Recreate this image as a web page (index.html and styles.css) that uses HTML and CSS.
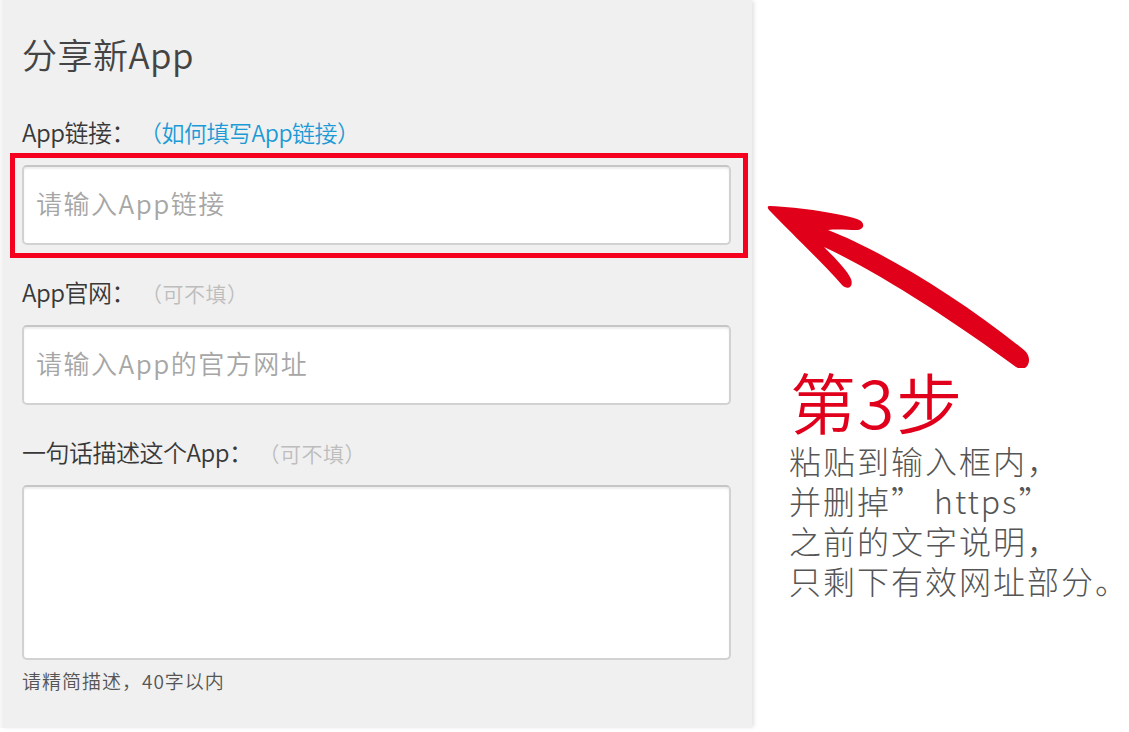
FILE: index.html
```html
<!DOCTYPE html>
<html lang="zh-CN">
<head>
<meta charset="utf-8">
<title>分享新App</title>
<link rel="stylesheet" href="styles.css">
</head>
<body>
<div class="page">
  <main class="panel">
    <h1 class="title">分享新App</h1>

    <div class="field field-first">
      <label class="label">App链接：<a class="help" href="#">（如何填写App链接）</a></label>
      <div class="input-wrap">
        <input class="input" type="text" placeholder="请输入App链接">
        <div class="highlight"></div>
      </div>
    </div>

    <div class="field">
      <label class="label">App官网：<span class="optional">（可不填）</span></label>
      <div class="input-wrap">
        <input class="input" type="text" placeholder="请输入App的官方网址">
      </div>
    </div>

    <div class="field">
      <label class="label">一句话描述这个App：<span class="optional">（可不填）</span></label>
      <textarea class="textarea"></textarea>
    </div>

    <p class="hint">请精简描述，40字以内</p>
  </main>

  <aside class="note">
    <svg class="arrow" width="280" height="178" viewBox="760 190 280 178" xmlns="http://www.w3.org/2000/svg">
      <path d="M770 206 C 800 207, 842 214, 857 219 C 866 222, 865 230, 856 230 C 848 230, 838 229, 828 230 C 880 250, 960 298, 1024 350 C 1034 358, 1028 374, 1016 367 C 955 322, 878 272, 824 247 C 835 258, 847 270, 851 279 C 854 288, 847 290, 842 285 C 820 260, 790 232, 770 211 C 767 208, 767 206, 770 206 Z" fill="#e0001a"/>
    </svg>
    <div class="step">第3步</div>
    <p class="desc">粘贴到输入框内，<br>并删掉” https”<br>之前的文字说明，<br>只剩下有效网址部分。</p>
  </aside>
</div>
</body>
</html>
```

FILE: styles.css
```css
* {
  box-sizing: border-box;
}

html, body {
  margin: 0;
  padding: 0;
  background: #ffffff;
}

body {
  font-family: "Noto Sans CJK SC", "Noto Sans", sans-serif;
  font-weight: 350;
  width: 1129px;
  height: 732px;
  overflow: hidden;
  text-spacing-trim: space-all;
}

.page {
  display: flex;
  align-items: flex-start;
}

.panel {
  flex: none;
  width: 752px;
  height: 728px;
  background: #f0f0f0;
  border-left: 2px solid #f6f6f6;
  padding: 0 21px 0 20px;
  box-shadow: 3px 0 4px -1px rgba(0, 0, 0, 0.12);
  display: flex;
  flex-direction: column;
}

.title {
  margin: 36px 0 0 0;
  height: 36px;
  font-size: 35px;
  line-height: 36px;
  font-weight: 350;
  color: #444444;
  letter-spacing: 0.5px;
}

.field {
  display: flex;
  flex-direction: column;
  gap: 21px;
  margin-top: 35px;
}

.field-first {
  margin-top: 48px;
}

.label {
  display: block;
  height: 24px;
  font-size: 24px;
  line-height: 24px;
  color: #383838;
  letter-spacing: -0.5px;
  white-space: nowrap;
}

.help {
  font-size: 23px;
  letter-spacing: -0.5px;
  color: #1c9ad6;
  text-decoration: none;
  margin-left: 4px;
}

.optional {
  font-size: 21px;
  letter-spacing: 0.5px;
  color: #bdbdbd;
  margin-left: 6px;
}

.input-wrap {
  position: relative;
}

.input,
.textarea {
  display: block;
  width: 100%;
  background: #ffffff;
  border: 2px solid #d2d2d2;
  border-top-color: #c6c6c6;
  border-radius: 5px;
  box-shadow: inset 0 2px 2px rgba(0, 0, 0, 0.07);
  font-family: "Noto Sans CJK SC", "Noto Sans", sans-serif;
  font-weight: 350;
  font-size: 26px;
  letter-spacing: 1.5px;
  color: #333333;
  outline: none;
  margin: 0;
}

.input {
  height: 80px;
  padding: 0 12px 6px 12px;
}

.input::placeholder {
  color: #a6a6a6;
}

.textarea {
  height: 175px;
  resize: none;
  padding: 12px;
}

.highlight {
  position: absolute;
  top: -12px;
  left: -12px;
  right: -17px;
  bottom: -13px;
  border: 5px solid #f5001e;
  pointer-events: none;
}

.hint {
  margin: 11px 0 0 0;
  font-size: 19px;
  line-height: 20px;
  letter-spacing: 1px;
  color: #555555;
}

.note {
  flex: 1;
  display: flex;
  flex-direction: column;
  align-items: flex-start;
}

.arrow {
  display: block;
  margin: 190px 0 0 8px;
}

.step {
  margin-left: 38px;
  height: 64px;
  font-size: 66px;
  line-height: 64px;
  letter-spacing: 2px;
  color: #e1001b;
  white-space: nowrap;
}

.desc {
  margin: 8px 0 0 37px;
  font-size: 32px;
  font-weight: 300;
  line-height: 40px;
  letter-spacing: 2px;
  color: #555555;
  white-space: nowrap;
}
```
